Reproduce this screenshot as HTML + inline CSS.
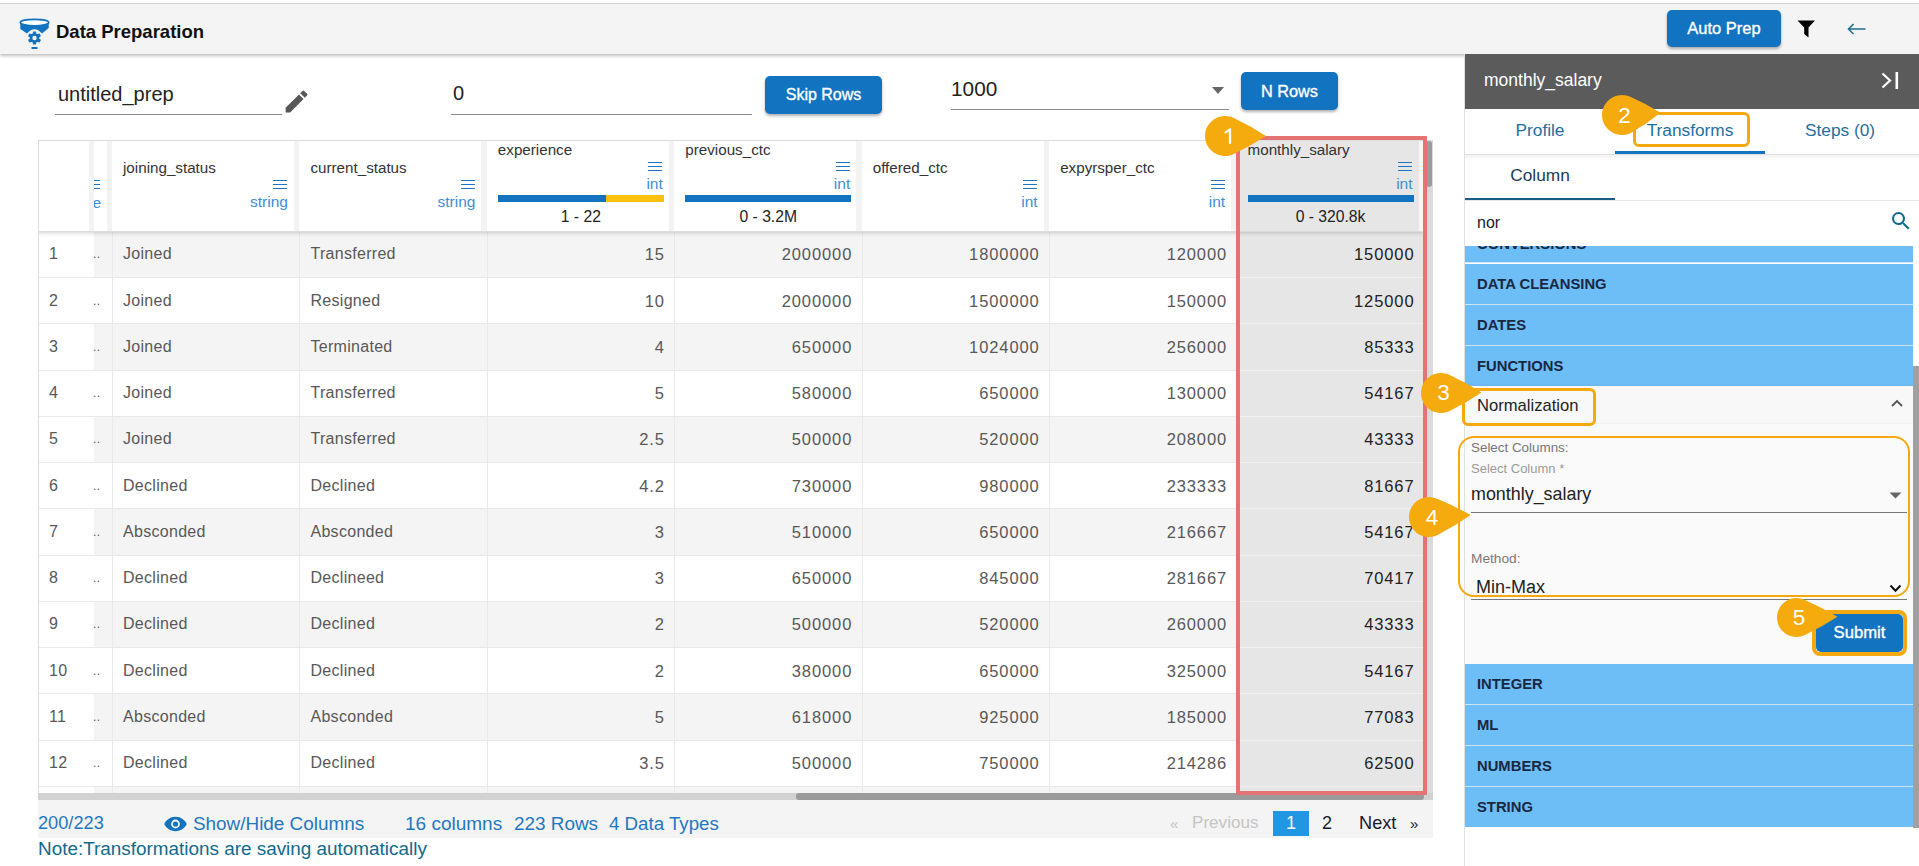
<!DOCTYPE html>
<html><head><meta charset="utf-8">
<style>
*{box-sizing:border-box;margin:0;padding:0}
html,body{width:1919px;height:866px;overflow:hidden;background:#fff;font-family:"Liberation Sans",sans-serif;color:#222}
.a{position:absolute;white-space:nowrap}
#topline{position:absolute;left:0;top:0;width:1919px;height:4px;background:#fff;border-bottom:1px solid #d6d6d6}
#hdr{position:absolute;left:0;top:4px;width:1919px;height:50px;background:#f4f4f4;box-shadow:0 2px 3px rgba(0,0,0,.25)}
.btn{position:absolute;background:#1273c1;color:#fff;font-weight:normal;-webkit-text-stroke:0.35px #fff;border-radius:5px;text-align:center;box-shadow:0 2px 3px rgba(0,0,0,.3)}
.uline{position:absolute;height:1px;background:#8a8a8a}
.td{font-size:16px;color:#585858;line-height:46px;height:46px;letter-spacing:0.3px}
.num{letter-spacing:0.9px;font-size:16.5px}
.th-name{font-size:15.2px;color:#333;line-height:18px}
.th-type{font-size:15.5px;color:#3c8fd3;line-height:18px}
.th-rng{font-size:15.7px;color:#222;text-align:center;line-height:18px}
.ft{color:#1f78c1}
.tab{text-align:center;font-size:17.3px;color:#1f6f9f}
.li{width:448px;height:41px;line-height:41px;background:#6dbdf6;border-bottom:1px solid #cfe5f5;padding-left:12px;font-size:14.8px;font-weight:bold;color:#1a2740}
.hl{border:3px solid #f5a90f}
</style></head><body>
<div id="topline"></div>
<div id="hdr"></div>
<!-- logo -->
<svg class="a" style="left:19px;top:18px" width="32" height="32" viewBox="0 0 32 32">
  <ellipse cx="15.5" cy="4.6" rx="14.2" ry="3.2" fill="#fff" stroke="#1273c1" stroke-width="1.6"/>
  <path d="M1.3 5 L1.3 11 L8 15.5 Q15.5 7 23 15.5 L29.7 10 L29.7 5 Q15.5 10.5 1.3 5Z" fill="#1273c1"/>
  <g transform="translate(15.5 20)" fill="#1273c1">
    <circle r="4.8"/>
    <rect x="-1.6" y="-6.6" width="3.2" height="13.2" rx="0.6"/>
    <rect x="-1.6" y="-6.6" width="3.2" height="13.2" rx="0.6" transform="rotate(60)"/>
    <rect x="-1.6" y="-6.6" width="3.2" height="13.2" rx="0.6" transform="rotate(120)"/>
    <circle r="2.2" fill="#f4f4f4"/>
  </g>
  <rect x="12.5" y="29" width="6" height="2" fill="#1273c1"/>
</svg>
<div class="a" style="left:56px;top:21px;font-size:18.5px;font-weight:bold;color:#111">Data Preparation</div>

<div class="btn" style="left:1667px;top:10px;width:114px;height:37px;line-height:37px;font-size:16.5px">Auto Prep</div>
<svg class="a" style="left:1797px;top:20px" width="19" height="18" viewBox="0 0 19 18"><path d="M0.5 0.5 H18 L11.5 7.5 V17.5 L7.2 14 V7.5Z" fill="#000"/></svg>
<svg class="a" style="left:1847px;top:23px" width="20" height="12" viewBox="0 0 20 12"><path d="M18.5 6 H2 M6.5 1 L1.5 6 L6.5 11" fill="none" stroke="#1d6f8f" stroke-width="1.6"/></svg>

<!-- inputs row -->
<div class="a" style="left:58px;top:82.5px;font-size:20px;color:#222">untitled_prep</div>
<div class="uline" style="left:55px;top:114px;width:227px"></div>
<svg class="a" style="left:282px;top:86.5px" width="29" height="29" viewBox="0 0 24 24"><path d="M3 17.25V21h3.75L17.81 9.94l-3.75-3.75L3 17.25zM20.71 7.04a1 1 0 0 0 0-1.41l-2.34-2.34a1 1 0 0 0-1.41 0l-1.83 1.83 3.75 3.75 1.83-1.83z" fill="#575757"/></svg>
<div class="a" style="left:453px;top:82px;font-size:20px;color:#222">0</div>
<div class="uline" style="left:451px;top:114px;width:301px"></div>
<div class="btn" style="left:765px;top:76px;width:117px;height:38px;line-height:38px;font-size:16px">Skip Rows</div>
<div class="a" style="left:951px;top:77px;font-size:20.8px;color:#222">1000</div>
<div class="uline" style="left:951px;top:109px;width:278px"></div>
<svg class="a" style="left:1211px;top:86px" width="14" height="9" viewBox="0 0 14 9"><path d="M1 1 H13 L7 8Z" fill="#666"/></svg>
<div class="btn" style="left:1241px;top:72px;width:97px;height:38px;line-height:38px;font-size:16.3px">N Rows</div>

<div class="a" style="left:38px;top:140px;width:1395px;height:660px;overflow:hidden"><div class="a" style="left:56px;top:91.73px;width:1330px;height:46.27px;background:#f4f4f4;border-bottom:1px solid #e9e9e9"></div><div class="a" style="left:0px;top:91.73px;width:56px;height:46.27px;background:#fff;border-bottom:1px solid #e9e9e9"></div><div class="a" style="left:56px;top:138.00px;width:1330px;height:46.27px;background:#fff;border-bottom:1px solid #e9e9e9"></div><div class="a" style="left:0px;top:138.00px;width:56px;height:46.27px;background:#fff;border-bottom:1px solid #e9e9e9"></div><div class="a" style="left:56px;top:184.27px;width:1330px;height:46.27px;background:#f4f4f4;border-bottom:1px solid #e9e9e9"></div><div class="a" style="left:0px;top:184.27px;width:56px;height:46.27px;background:#fff;border-bottom:1px solid #e9e9e9"></div><div class="a" style="left:56px;top:230.54px;width:1330px;height:46.27px;background:#fff;border-bottom:1px solid #e9e9e9"></div><div class="a" style="left:0px;top:230.54px;width:56px;height:46.27px;background:#fff;border-bottom:1px solid #e9e9e9"></div><div class="a" style="left:56px;top:276.81px;width:1330px;height:46.27px;background:#f4f4f4;border-bottom:1px solid #e9e9e9"></div><div class="a" style="left:0px;top:276.81px;width:56px;height:46.27px;background:#fff;border-bottom:1px solid #e9e9e9"></div><div class="a" style="left:56px;top:323.08px;width:1330px;height:46.27px;background:#fff;border-bottom:1px solid #e9e9e9"></div><div class="a" style="left:0px;top:323.08px;width:56px;height:46.27px;background:#fff;border-bottom:1px solid #e9e9e9"></div><div class="a" style="left:56px;top:369.35px;width:1330px;height:46.27px;background:#f4f4f4;border-bottom:1px solid #e9e9e9"></div><div class="a" style="left:0px;top:369.35px;width:56px;height:46.27px;background:#fff;border-bottom:1px solid #e9e9e9"></div><div class="a" style="left:56px;top:415.62px;width:1330px;height:46.27px;background:#fff;border-bottom:1px solid #e9e9e9"></div><div class="a" style="left:0px;top:415.62px;width:56px;height:46.27px;background:#fff;border-bottom:1px solid #e9e9e9"></div><div class="a" style="left:56px;top:461.89px;width:1330px;height:46.27px;background:#f4f4f4;border-bottom:1px solid #e9e9e9"></div><div class="a" style="left:0px;top:461.89px;width:56px;height:46.27px;background:#fff;border-bottom:1px solid #e9e9e9"></div><div class="a" style="left:56px;top:508.16px;width:1330px;height:46.27px;background:#fff;border-bottom:1px solid #e9e9e9"></div><div class="a" style="left:0px;top:508.16px;width:56px;height:46.27px;background:#fff;border-bottom:1px solid #e9e9e9"></div><div class="a" style="left:56px;top:554.43px;width:1330px;height:46.27px;background:#f4f4f4;border-bottom:1px solid #e9e9e9"></div><div class="a" style="left:0px;top:554.43px;width:56px;height:46.27px;background:#fff;border-bottom:1px solid #e9e9e9"></div><div class="a" style="left:56px;top:600.70px;width:1330px;height:46.27px;background:#fff;border-bottom:1px solid #e9e9e9"></div><div class="a" style="left:0px;top:600.70px;width:56px;height:46.27px;background:#fff;border-bottom:1px solid #e9e9e9"></div><div class="a" style="left:56px;top:646.97px;width:1330px;height:46.27px;background:#f4f4f4;border-bottom:1px solid #e9e9e9"></div><div class="a" style="left:0px;top:646.97px;width:56px;height:46.27px;background:#fff;border-bottom:1px solid #e9e9e9"></div><div class="a" style="left:1198.58px;top:91.72999999999999px;width:187.42px;height:601.51px;background:#e6e6e6"></div><div class="a" style="left:1198.58px;top:137.00px;width:187.42px;height:1px;background:#f0f0f0"></div><div class="a" style="left:1198.58px;top:183.27px;width:187.42px;height:1px;background:#f0f0f0"></div><div class="a" style="left:1198.58px;top:229.54px;width:187.42px;height:1px;background:#f0f0f0"></div><div class="a" style="left:1198.58px;top:275.81px;width:187.42px;height:1px;background:#f0f0f0"></div><div class="a" style="left:1198.58px;top:322.08px;width:187.42px;height:1px;background:#f0f0f0"></div><div class="a" style="left:1198.58px;top:368.35px;width:187.42px;height:1px;background:#f0f0f0"></div><div class="a" style="left:1198.58px;top:414.62px;width:187.42px;height:1px;background:#f0f0f0"></div><div class="a" style="left:1198.58px;top:460.89px;width:187.42px;height:1px;background:#f0f0f0"></div><div class="a" style="left:1198.58px;top:507.16px;width:187.42px;height:1px;background:#f0f0f0"></div><div class="a" style="left:1198.58px;top:553.43px;width:187.42px;height:1px;background:#f0f0f0"></div><div class="a" style="left:1198.58px;top:599.70px;width:187.42px;height:1px;background:#f0f0f0"></div><div class="a" style="left:1198.58px;top:645.97px;width:187.42px;height:1px;background:#f0f0f0"></div><div class="a" style="left:1198.58px;top:692.24px;width:187.42px;height:1px;background:#f0f0f0"></div><div class="a" style="left:74.00px;top:91.72999999999999px;width:1px;height:601.51px;background:#e9e9e9"></div><div class="a" style="left:261.43px;top:91.72999999999999px;width:1px;height:601.51px;background:#e9e9e9"></div><div class="a" style="left:448.86px;top:91.72999999999999px;width:1px;height:601.51px;background:#e9e9e9"></div><div class="a" style="left:636.29px;top:91.72999999999999px;width:1px;height:601.51px;background:#e9e9e9"></div><div class="a" style="left:823.72px;top:91.72999999999999px;width:1px;height:601.51px;background:#e9e9e9"></div><div class="a" style="left:1011.15px;top:91.72999999999999px;width:1px;height:601.51px;background:#e9e9e9"></div><div class="a" style="left:1198.58px;top:91.72999999999999px;width:1px;height:601.51px;background:#e9e9e9"></div><div class="a" style="left:1386.01px;top:91.72999999999999px;width:1px;height:601.51px;background:#e9e9e9"></div><div class="a td" style="left:11px;top:91.23px">1</div><div class="a td" style="left:55px;top:91.23px;font-size:12px;letter-spacing:0.5px">..</div><div class="a td" style="left:85.00px;top:91.23px">Joined</div><div class="a td" style="left:272.43px;top:91.23px">Transferred</div><div class="a td num" style="right:768.21px;top:91.23px">15</div><div class="a td num" style="right:580.78px;top:91.23px">2000000</div><div class="a td num" style="right:393.35px;top:91.23px">1800000</div><div class="a td num" style="right:205.92px;top:91.23px">120000</div><div class="a td num" style="right:18.49px;top:91.23px;color:#222">150000</div><div class="a td" style="left:11px;top:137.50px">2</div><div class="a td" style="left:55px;top:137.50px;font-size:12px;letter-spacing:0.5px">..</div><div class="a td" style="left:85.00px;top:137.50px">Joined</div><div class="a td" style="left:272.43px;top:137.50px">Resigned</div><div class="a td num" style="right:768.21px;top:137.50px">10</div><div class="a td num" style="right:580.78px;top:137.50px">2000000</div><div class="a td num" style="right:393.35px;top:137.50px">1500000</div><div class="a td num" style="right:205.92px;top:137.50px">150000</div><div class="a td num" style="right:18.49px;top:137.50px;color:#222">125000</div><div class="a td" style="left:11px;top:183.77px">3</div><div class="a td" style="left:55px;top:183.77px;font-size:12px;letter-spacing:0.5px">..</div><div class="a td" style="left:85.00px;top:183.77px">Joined</div><div class="a td" style="left:272.43px;top:183.77px">Terminated</div><div class="a td num" style="right:768.21px;top:183.77px">4</div><div class="a td num" style="right:580.78px;top:183.77px">650000</div><div class="a td num" style="right:393.35px;top:183.77px">1024000</div><div class="a td num" style="right:205.92px;top:183.77px">256000</div><div class="a td num" style="right:18.49px;top:183.77px;color:#222">85333</div><div class="a td" style="left:11px;top:230.04px">4</div><div class="a td" style="left:55px;top:230.04px;font-size:12px;letter-spacing:0.5px">..</div><div class="a td" style="left:85.00px;top:230.04px">Joined</div><div class="a td" style="left:272.43px;top:230.04px">Transferred</div><div class="a td num" style="right:768.21px;top:230.04px">5</div><div class="a td num" style="right:580.78px;top:230.04px">580000</div><div class="a td num" style="right:393.35px;top:230.04px">650000</div><div class="a td num" style="right:205.92px;top:230.04px">130000</div><div class="a td num" style="right:18.49px;top:230.04px;color:#222">54167</div><div class="a td" style="left:11px;top:276.31px">5</div><div class="a td" style="left:55px;top:276.31px;font-size:12px;letter-spacing:0.5px">..</div><div class="a td" style="left:85.00px;top:276.31px">Joined</div><div class="a td" style="left:272.43px;top:276.31px">Transferred</div><div class="a td num" style="right:768.21px;top:276.31px">2.5</div><div class="a td num" style="right:580.78px;top:276.31px">500000</div><div class="a td num" style="right:393.35px;top:276.31px">520000</div><div class="a td num" style="right:205.92px;top:276.31px">208000</div><div class="a td num" style="right:18.49px;top:276.31px;color:#222">43333</div><div class="a td" style="left:11px;top:322.58px">6</div><div class="a td" style="left:55px;top:322.58px;font-size:12px;letter-spacing:0.5px">..</div><div class="a td" style="left:85.00px;top:322.58px">Declined</div><div class="a td" style="left:272.43px;top:322.58px">Declined</div><div class="a td num" style="right:768.21px;top:322.58px">4.2</div><div class="a td num" style="right:580.78px;top:322.58px">730000</div><div class="a td num" style="right:393.35px;top:322.58px">980000</div><div class="a td num" style="right:205.92px;top:322.58px">233333</div><div class="a td num" style="right:18.49px;top:322.58px;color:#222">81667</div><div class="a td" style="left:11px;top:368.85px">7</div><div class="a td" style="left:55px;top:368.85px;font-size:12px;letter-spacing:0.5px">..</div><div class="a td" style="left:85.00px;top:368.85px">Absconded</div><div class="a td" style="left:272.43px;top:368.85px">Absconded</div><div class="a td num" style="right:768.21px;top:368.85px">3</div><div class="a td num" style="right:580.78px;top:368.85px">510000</div><div class="a td num" style="right:393.35px;top:368.85px">650000</div><div class="a td num" style="right:205.92px;top:368.85px">216667</div><div class="a td num" style="right:18.49px;top:368.85px;color:#222">54167</div><div class="a td" style="left:11px;top:415.12px">8</div><div class="a td" style="left:55px;top:415.12px;font-size:12px;letter-spacing:0.5px">..</div><div class="a td" style="left:85.00px;top:415.12px">Declined</div><div class="a td" style="left:272.43px;top:415.12px">Declineed</div><div class="a td num" style="right:768.21px;top:415.12px">3</div><div class="a td num" style="right:580.78px;top:415.12px">650000</div><div class="a td num" style="right:393.35px;top:415.12px">845000</div><div class="a td num" style="right:205.92px;top:415.12px">281667</div><div class="a td num" style="right:18.49px;top:415.12px;color:#222">70417</div><div class="a td" style="left:11px;top:461.39px">9</div><div class="a td" style="left:55px;top:461.39px;font-size:12px;letter-spacing:0.5px">..</div><div class="a td" style="left:85.00px;top:461.39px">Declined</div><div class="a td" style="left:272.43px;top:461.39px">Declined</div><div class="a td num" style="right:768.21px;top:461.39px">2</div><div class="a td num" style="right:580.78px;top:461.39px">500000</div><div class="a td num" style="right:393.35px;top:461.39px">520000</div><div class="a td num" style="right:205.92px;top:461.39px">260000</div><div class="a td num" style="right:18.49px;top:461.39px;color:#222">43333</div><div class="a td" style="left:11px;top:507.66px">10</div><div class="a td" style="left:55px;top:507.66px;font-size:12px;letter-spacing:0.5px">..</div><div class="a td" style="left:85.00px;top:507.66px">Declined</div><div class="a td" style="left:272.43px;top:507.66px">Declined</div><div class="a td num" style="right:768.21px;top:507.66px">2</div><div class="a td num" style="right:580.78px;top:507.66px">380000</div><div class="a td num" style="right:393.35px;top:507.66px">650000</div><div class="a td num" style="right:205.92px;top:507.66px">325000</div><div class="a td num" style="right:18.49px;top:507.66px;color:#222">54167</div><div class="a td" style="left:11px;top:553.93px">11</div><div class="a td" style="left:55px;top:553.93px;font-size:12px;letter-spacing:0.5px">..</div><div class="a td" style="left:85.00px;top:553.93px">Absconded</div><div class="a td" style="left:272.43px;top:553.93px">Absconded</div><div class="a td num" style="right:768.21px;top:553.93px">5</div><div class="a td num" style="right:580.78px;top:553.93px">618000</div><div class="a td num" style="right:393.35px;top:553.93px">925000</div><div class="a td num" style="right:205.92px;top:553.93px">185000</div><div class="a td num" style="right:18.49px;top:553.93px;color:#222">77083</div><div class="a td" style="left:11px;top:600.20px">12</div><div class="a td" style="left:55px;top:600.20px;font-size:12px;letter-spacing:0.5px">..</div><div class="a td" style="left:85.00px;top:600.20px">Declined</div><div class="a td" style="left:272.43px;top:600.20px">Declined</div><div class="a td num" style="right:768.21px;top:600.20px">3.5</div><div class="a td num" style="right:580.78px;top:600.20px">500000</div><div class="a td num" style="right:393.35px;top:600.20px">750000</div><div class="a td num" style="right:205.92px;top:600.20px">214286</div><div class="a td num" style="right:18.49px;top:600.20px;color:#222">62500</div><div class="a" style="left:0;top:0;width:1386px;height:91px;background:#fff;box-shadow:0 2px 4px rgba(0,0,0,.18)"></div><div class="a" style="left:51.00px;top:0;width:5px;height:91px;background:#f3f3f3"></div><div class="a" style="left:69.00px;top:0;width:5px;height:91px;background:#f3f3f3"></div><div class="a" style="left:255.93px;top:0;width:5.5px;height:91px;background:#f3f3f3"></div><div class="a" style="left:443.36px;top:0;width:5.5px;height:91px;background:#f3f3f3"></div><div class="a" style="left:630.79px;top:0;width:5.5px;height:91px;background:#f3f3f3"></div><div class="a" style="left:818.22px;top:0;width:5.5px;height:91px;background:#f3f3f3"></div><div class="a" style="left:1005.65px;top:0;width:5.5px;height:91px;background:#f3f3f3"></div><div class="a" style="left:1193.08px;top:0;width:5.5px;height:91px;background:#f3f3f3"></div><div class="a" style="left:1198.58px;top:0;width:187.43px;height:91px;background:#e6e6e6"></div><div class="a" style="left:1380.51px;top:0;width:4.5px;height:91px;background:#f6f6f6"></div><div class="a" style="left:56px;top:0;width:13px;height:91px;overflow:hidden"><svg class="a" style="left:-8px;top:40px" width="14" height="10" viewBox="0 0 14 10"><path d="M0.5 0.5H13.5M0.5 4.5H13.5M0.5 8.5H13.5" stroke="#1f74bf" stroke-width="1.05" stroke-linecap="round"/></svg><div class="a th-type" style="right:6px;top:54px">date</div></div><div class="a th-name" style="left:85.00px;top:19.00px">joining_status</div><svg class="a" style="left:235.43px;top:40.00px" width="14" height="10" viewBox="0 0 14 10"><path d="M0.5 0.5H13.5M0.5 4.5H13.5M0.5 8.5H13.5" stroke="#1f74bf" stroke-width="1.05" stroke-linecap="round"/></svg><div class="a th-type" style="right:1145.07px;top:53.00px">string</div><div class="a th-name" style="left:272.43px;top:19.00px">current_status</div><svg class="a" style="left:422.86px;top:40.00px" width="14" height="10" viewBox="0 0 14 10"><path d="M0.5 0.5H13.5M0.5 4.5H13.5M0.5 8.5H13.5" stroke="#1f74bf" stroke-width="1.05" stroke-linecap="round"/></svg><div class="a th-type" style="right:957.64px;top:53.00px">string</div><div class="a th-name" style="left:459.86px;top:1.00px">experience</div><svg class="a" style="left:610.29px;top:22.00px" width="14" height="10" viewBox="0 0 14 10"><path d="M0.5 0.5H13.5M0.5 4.5H13.5M0.5 8.5H13.5" stroke="#1f74bf" stroke-width="1.05" stroke-linecap="round"/></svg><div class="a th-type" style="right:770.21px;top:35.00px">int</div><div class="a" style="left:459.86px;top:55px;width:165.93px;height:7px;background:#1273c1"></div><div class="a" style="left:567.71px;top:55px;width:58.08px;height:7px;background:#fbbf0e"></div><div class="a th-rng" style="left:459.86px;width:165.93px;top:67.50px">1 - 22</div><div class="a th-name" style="left:647.29px;top:1.00px">previous_ctc</div><svg class="a" style="left:797.72px;top:22.00px" width="14" height="10" viewBox="0 0 14 10"><path d="M0.5 0.5H13.5M0.5 4.5H13.5M0.5 8.5H13.5" stroke="#1f74bf" stroke-width="1.05" stroke-linecap="round"/></svg><div class="a th-type" style="right:582.78px;top:35.00px">int</div><div class="a" style="left:647.29px;top:55px;width:165.93px;height:7px;background:#1273c1"></div><div class="a th-rng" style="left:647.29px;width:165.93px;top:67.50px">0 - 3.2M</div><div class="a th-name" style="left:834.72px;top:19.00px">offered_ctc</div><svg class="a" style="left:985.15px;top:40.00px" width="14" height="10" viewBox="0 0 14 10"><path d="M0.5 0.5H13.5M0.5 4.5H13.5M0.5 8.5H13.5" stroke="#1f74bf" stroke-width="1.05" stroke-linecap="round"/></svg><div class="a th-type" style="right:395.35px;top:53.00px">int</div><div class="a th-name" style="left:1022.15px;top:19.00px">expyrsper_ctc</div><svg class="a" style="left:1172.58px;top:40.00px" width="14" height="10" viewBox="0 0 14 10"><path d="M0.5 0.5H13.5M0.5 4.5H13.5M0.5 8.5H13.5" stroke="#1f74bf" stroke-width="1.05" stroke-linecap="round"/></svg><div class="a th-type" style="right:207.92px;top:53.00px">int</div><div class="a th-name" style="left:1209.58px;top:1.00px">monthly_salary</div><svg class="a" style="left:1360.01px;top:22.00px" width="14" height="10" viewBox="0 0 14 10"><path d="M0.5 0.5H13.5M0.5 4.5H13.5M0.5 8.5H13.5" stroke="#1f74bf" stroke-width="1.05" stroke-linecap="round"/></svg><div class="a th-type" style="right:20.49px;top:35.00px">int</div><div class="a" style="left:1209.58px;top:55px;width:165.93px;height:7px;background:#1273c1"></div><div class="a th-rng" style="left:1209.58px;width:165.93px;top:67.50px">0 - 320.8k</div><div class="a" style="left:0;top:0;width:1387px;height:660px;border-left:1px solid #dcdcdc;border-top:1px solid #dcdcdc"></div><div class="a" style="left:0;top:653px;width:1395px;height:7px;background:#d2d2d2"></div><div class="a" style="left:758px;top:653px;width:628px;height:7px;background:#9b9b9b;border-radius:3px"></div><div class="a" style="left:1386px;top:0;width:9px;height:653px;background:#dadada"></div><div class="a" style="left:1388px;top:1px;width:6px;height:46px;background:#9b9b9b;border-radius:3px"></div></div><!-- footer -->
<div class="a" style="left:38px;top:800px;width:1395px;height:38px;background:#f4f4f4"></div>
<div class="a ft" style="left:38px;top:812.5px;font-size:18.2px">200/223</div>
<svg class="a" style="left:164px;top:816px" width="23" height="16" viewBox="0 0 24 16"><path d="M12 0.5C6.5 0.5 2 4 0.3 8 2 12 6.5 15.5 12 15.5S22 12 23.7 8C22 4 17.5 0.5 12 0.5z" fill="#1273c1"/><circle cx="12" cy="8" r="4.6" fill="#f4f4f4"/><circle cx="12" cy="8" r="2.7" fill="#1273c1"/></svg>
<div class="a ft" style="left:193px;top:812.5px;font-size:18.9px">Show/Hide Columns</div>
<div class="a ft" style="left:405px;top:812.5px;font-size:19px">16 columns</div>
<div class="a ft" style="left:514px;top:812.5px;font-size:18.9px">223 Rows</div>
<div class="a ft" style="left:609px;top:812.5px;font-size:18.7px">4 Data Types</div>
<div class="a" style="left:1170px;top:815px;font-size:15px;color:#c4c4c4">«</div>
<div class="a" style="left:1192px;top:812.5px;font-size:17.1px;color:#c4c4c4">Previous</div>
<div class="a" style="left:1273px;top:811px;width:36px;height:25px;background:#2196e3"></div>
<div class="a" style="left:1273px;top:811px;width:36px;height:25px;line-height:25px;text-align:center;font-size:18px;color:#fff">1</div>
<div class="a" style="left:1322px;top:812.5px;font-size:18px;color:#1a1a2e">2</div>
<div class="a" style="left:1359px;top:812.5px;font-size:18.2px;color:#1a1a2e">Next</div>
<div class="a" style="left:1410px;top:815px;font-size:15px;color:#1a1a2e">»</div>
<div class="a" style="left:38px;top:838px;font-size:18.9px;color:#106a8c">Note:Transformations are saving automatically</div>

<!-- red highlight box -->
<div class="a" style="left:1236px;top:136px;width:191px;height:658.5px;border:4px solid #e57373;border-radius:1px"></div>

<!-- RIGHT PANEL -->
<div class="a" style="left:1464px;top:54px;width:455px;height:812px;background:#fff;border-left:1px solid #e0e0e0"></div>
<div class="a" style="left:1465px;top:54px;width:454px;height:55px;background:#5b5b5b"></div>
<div class="a" style="left:1484px;top:70px;font-size:17.5px;color:#fff">monthly_salary</div>
<svg class="a" style="left:1881px;top:72px" width="18" height="17" viewBox="0 0 18 17"><path d="M1.5 1.5 L9 8.5 L1.5 15.5" fill="none" stroke="#fff" stroke-width="2.2"/><rect x="14.5" y="0" width="2.6" height="17" fill="#fff"/></svg>
<!-- tabs -->
<div class="a" style="left:1465px;top:155px;width:454px;height:6px;background:linear-gradient(rgba(0,0,0,.05),rgba(0,0,0,0))"></div><div class="a" style="left:1465px;top:154px;width:454px;height:1px;background:#e0e0e0"></div>
<div class="a tab" style="left:1465px;width:150px;top:119.5px">Profile</div>
<div class="a tab" style="left:1615px;width:150px;top:119.5px">Transforms</div>
<div class="a tab" style="left:1765px;width:150px;top:119.5px">Steps (0)</div>
<div class="a" style="left:1615px;top:151px;width:150px;height:3px;background:#1273c1"></div>
<div class="a" style="left:1465px;top:164.5px;width:150px;text-align:center;font-size:17.3px;color:#1d3b53">Column</div>
<div class="a" style="left:1465px;top:197.5px;width:150px;height:2.5px;background:#1b5e85"></div>
<div class="a" style="left:1465px;top:200px;width:454px;height:1px;background:#e6e6e6"></div>
<div class="a" style="left:1477px;top:214px;font-size:16px;color:#222">nor</div>
<svg class="a" style="left:1888.5px;top:209.2px" width="24" height="24" viewBox="0 0 24 24"><path d="M15.5 14h-.79l-.28-.27A6.47 6.47 0 0 0 16 9.5 6.5 6.5 0 1 0 9.5 16c1.61 0 3.09-.59 4.23-1.57l.27.28v.79l5 4.99L20.49 19l-4.99-5zm-6 0C7.01 14 5 11.99 5 9.5S7.01 5 9.5 5 14 7.01 14 9.5 11.99 14 9.5 14z" fill="#0d6890"/></svg>
<!-- list -->
<div class="a" style="left:1465px;top:246px;width:448px;height:581px;overflow:hidden">
  <div class="a li" style="left:0;top:-23px;height:40px;line-height:43px">CONVERSIONS</div>
  <div class="a li" style="left:0;top:18px">DATA CLEANSING</div>
  <div class="a li" style="left:0;top:59px">DATES</div>
  <div class="a li" style="left:0;top:100px">FUNCTIONS</div>
  <div class="a" style="left:0;top:140px;width:448px;height:38px;background:#f8f8f8;box-shadow:0 1px 3px rgba(0,0,0,.2)"></div>
  <div class="a" style="left:0;top:178px;width:448px;height:240px;background:#fafafa;box-shadow:0 1px 3px rgba(0,0,0,.12)"></div>
  <div class="a li" style="left:0;top:418px">INTEGER</div>
  <div class="a li" style="left:0;top:459px">ML</div>
  <div class="a li" style="left:0;top:500px">NUMBERS</div>
  <div class="a li" style="left:0;top:541px">STRING</div>
</div>
<div class="a" style="left:1913px;top:366px;width:6px;height:462px;background:#a0a0a0"></div>
<div class="a" style="left:1477px;top:395.5px;font-size:16.6px;color:#222">Normalization</div>
<svg class="a" style="left:1891px;top:399px" width="12" height="8" viewBox="0 0 12 8"><path d="M1 7 L6 2 L11 7" fill="none" stroke="#555" stroke-width="1.8"/></svg>
<div class="a" style="left:1471px;top:440px;font-size:13.4px;color:#777">Select Columns:</div>
<div class="a" style="left:1471px;top:461px;font-size:13px;color:#9a9a9a">Select Column *</div>
<div class="a" style="left:1471px;top:484px;font-size:17.9px;color:#222">monthly_salary</div>
<svg class="a" style="left:1889px;top:492px" width="13" height="7" viewBox="0 0 13 7"><path d="M0.5 0.5 H12.5 L6.5 6.5Z" fill="#666"/></svg>
<div class="a" style="left:1471px;top:512px;width:436px;height:1px;background:#777"></div>
<div class="a" style="left:1471px;top:551px;font-size:13.7px;color:#777">Method:</div>
<div class="a" style="left:1476px;top:577px;font-size:18px;color:#222">Min-Max</div>
<svg class="a" style="left:1889px;top:584px" width="13" height="9" viewBox="0 0 13 9"><path d="M1.5 1.5 L6.5 6.8 L11.5 1.5" fill="none" stroke="#111" stroke-width="2"/></svg>
<div class="a" style="left:1471px;top:599px;width:436px;height:1px;background:#777"></div>
<div class="btn" style="left:1816px;top:614px;width:87px;height:38px;line-height:38px;font-size:16.7px;box-shadow:none;border-radius:5px">Submit</div>

<!-- ORANGE HIGHLIGHTS -->
<div class="a hl" style="left:1633px;top:112px;width:117px;height:35px;border-radius:6px;border-width:3.5px"></div>
<div class="a hl" style="left:1462px;top:388px;width:134px;height:38px;border-radius:6px;border-width:3.5px"></div>
<div class="a hl" style="left:1458px;top:436px;width:452px;height:161px;border-radius:16px;border-width:2.5px"></div>
<div class="a hl" style="left:1812px;top:610px;width:95px;height:46px;border-radius:8px;border-width:4px"></div>
<svg class="a" style="left:1203.00px;top:114.00px" width="65.00" height="44.00" viewBox="0 0 65.00 44.00"><path d="M31.76 39.46 A20 20 0 1 1 31.76 4.54 Q47.96 12.22 63.00 22.00 Q47.96 31.78 31.76 39.46Z" fill="#f5aa0e"/></svg><div class="a" style="left:1208.00px;top:116.50px;width:40px;height:40px;line-height:40px;text-align:center;color:#fff;font-size:22.5px"></div>
<svg class="a" style="left:1223px;top:127px" width="10" height="19" viewBox="0 0 10 19"><path d="M7 2.3 V16 M7 2.4 L2.6 5.4" fill="none" stroke="#fff" stroke-width="2.3" stroke-linecap="round" stroke-linejoin="round"/></svg>
<svg class="a" style="left:1599.50px;top:93.00px" width="62.50" height="44.00" viewBox="0 0 62.50 44.00"><path d="M33.37 38.45 A20 20 0 1 1 31.33 4.31 Q46.48 10.94 60.50 19.70 Q47.62 30.06 33.37 38.45Z" fill="#f5aa0e"/></svg><div class="a" style="left:1604.50px;top:95.50px;width:40px;height:40px;line-height:40px;text-align:center;color:#fff;font-size:22.5px">2</div>
<svg class="a" style="left:1418.50px;top:370.70px" width="64.50" height="44.00" viewBox="0 0 64.50 44.00"><path d="M32.05 39.29 A20 20 0 1 1 31.70 4.51 Q47.68 12.01 62.50 21.60 Q47.88 31.48 32.05 39.29Z" fill="#f5aa0e"/></svg><div class="a" style="left:1423.50px;top:373.20px;width:40px;height:40px;line-height:40px;text-align:center;color:#fff;font-size:22.5px">3</div>
<svg class="a" style="left:1407.00px;top:495.20px" width="65.70" height="44.00" viewBox="0 0 65.70 44.00"><path d="M32.37 39.10 A20 20 0 1 1 30.77 4.03 Q47.76 10.99 63.70 20.10 Q48.66 30.63 32.37 39.10Z" fill="#f5aa0e"/></svg><div class="a" style="left:1412.00px;top:497.70px;width:40px;height:40px;line-height:40px;text-align:center;color:#fff;font-size:22.5px">4</div>
<svg class="a" style="left:1774.50px;top:595.50px" width="64.50" height="43.00" viewBox="0 0 64.50 43.00"><path d="M31.06 38.49 A19.5 19.5 0 1 1 30.48 4.19 Q47.04 11.43 62.50 20.80 Q47.37 30.69 31.06 38.49Z" fill="#f5aa0e"/></svg><div class="a" style="left:1779.50px;top:598.00px;width:39.0px;height:39.0px;line-height:39.0px;text-align:center;color:#fff;font-size:22.5px">5</div>
